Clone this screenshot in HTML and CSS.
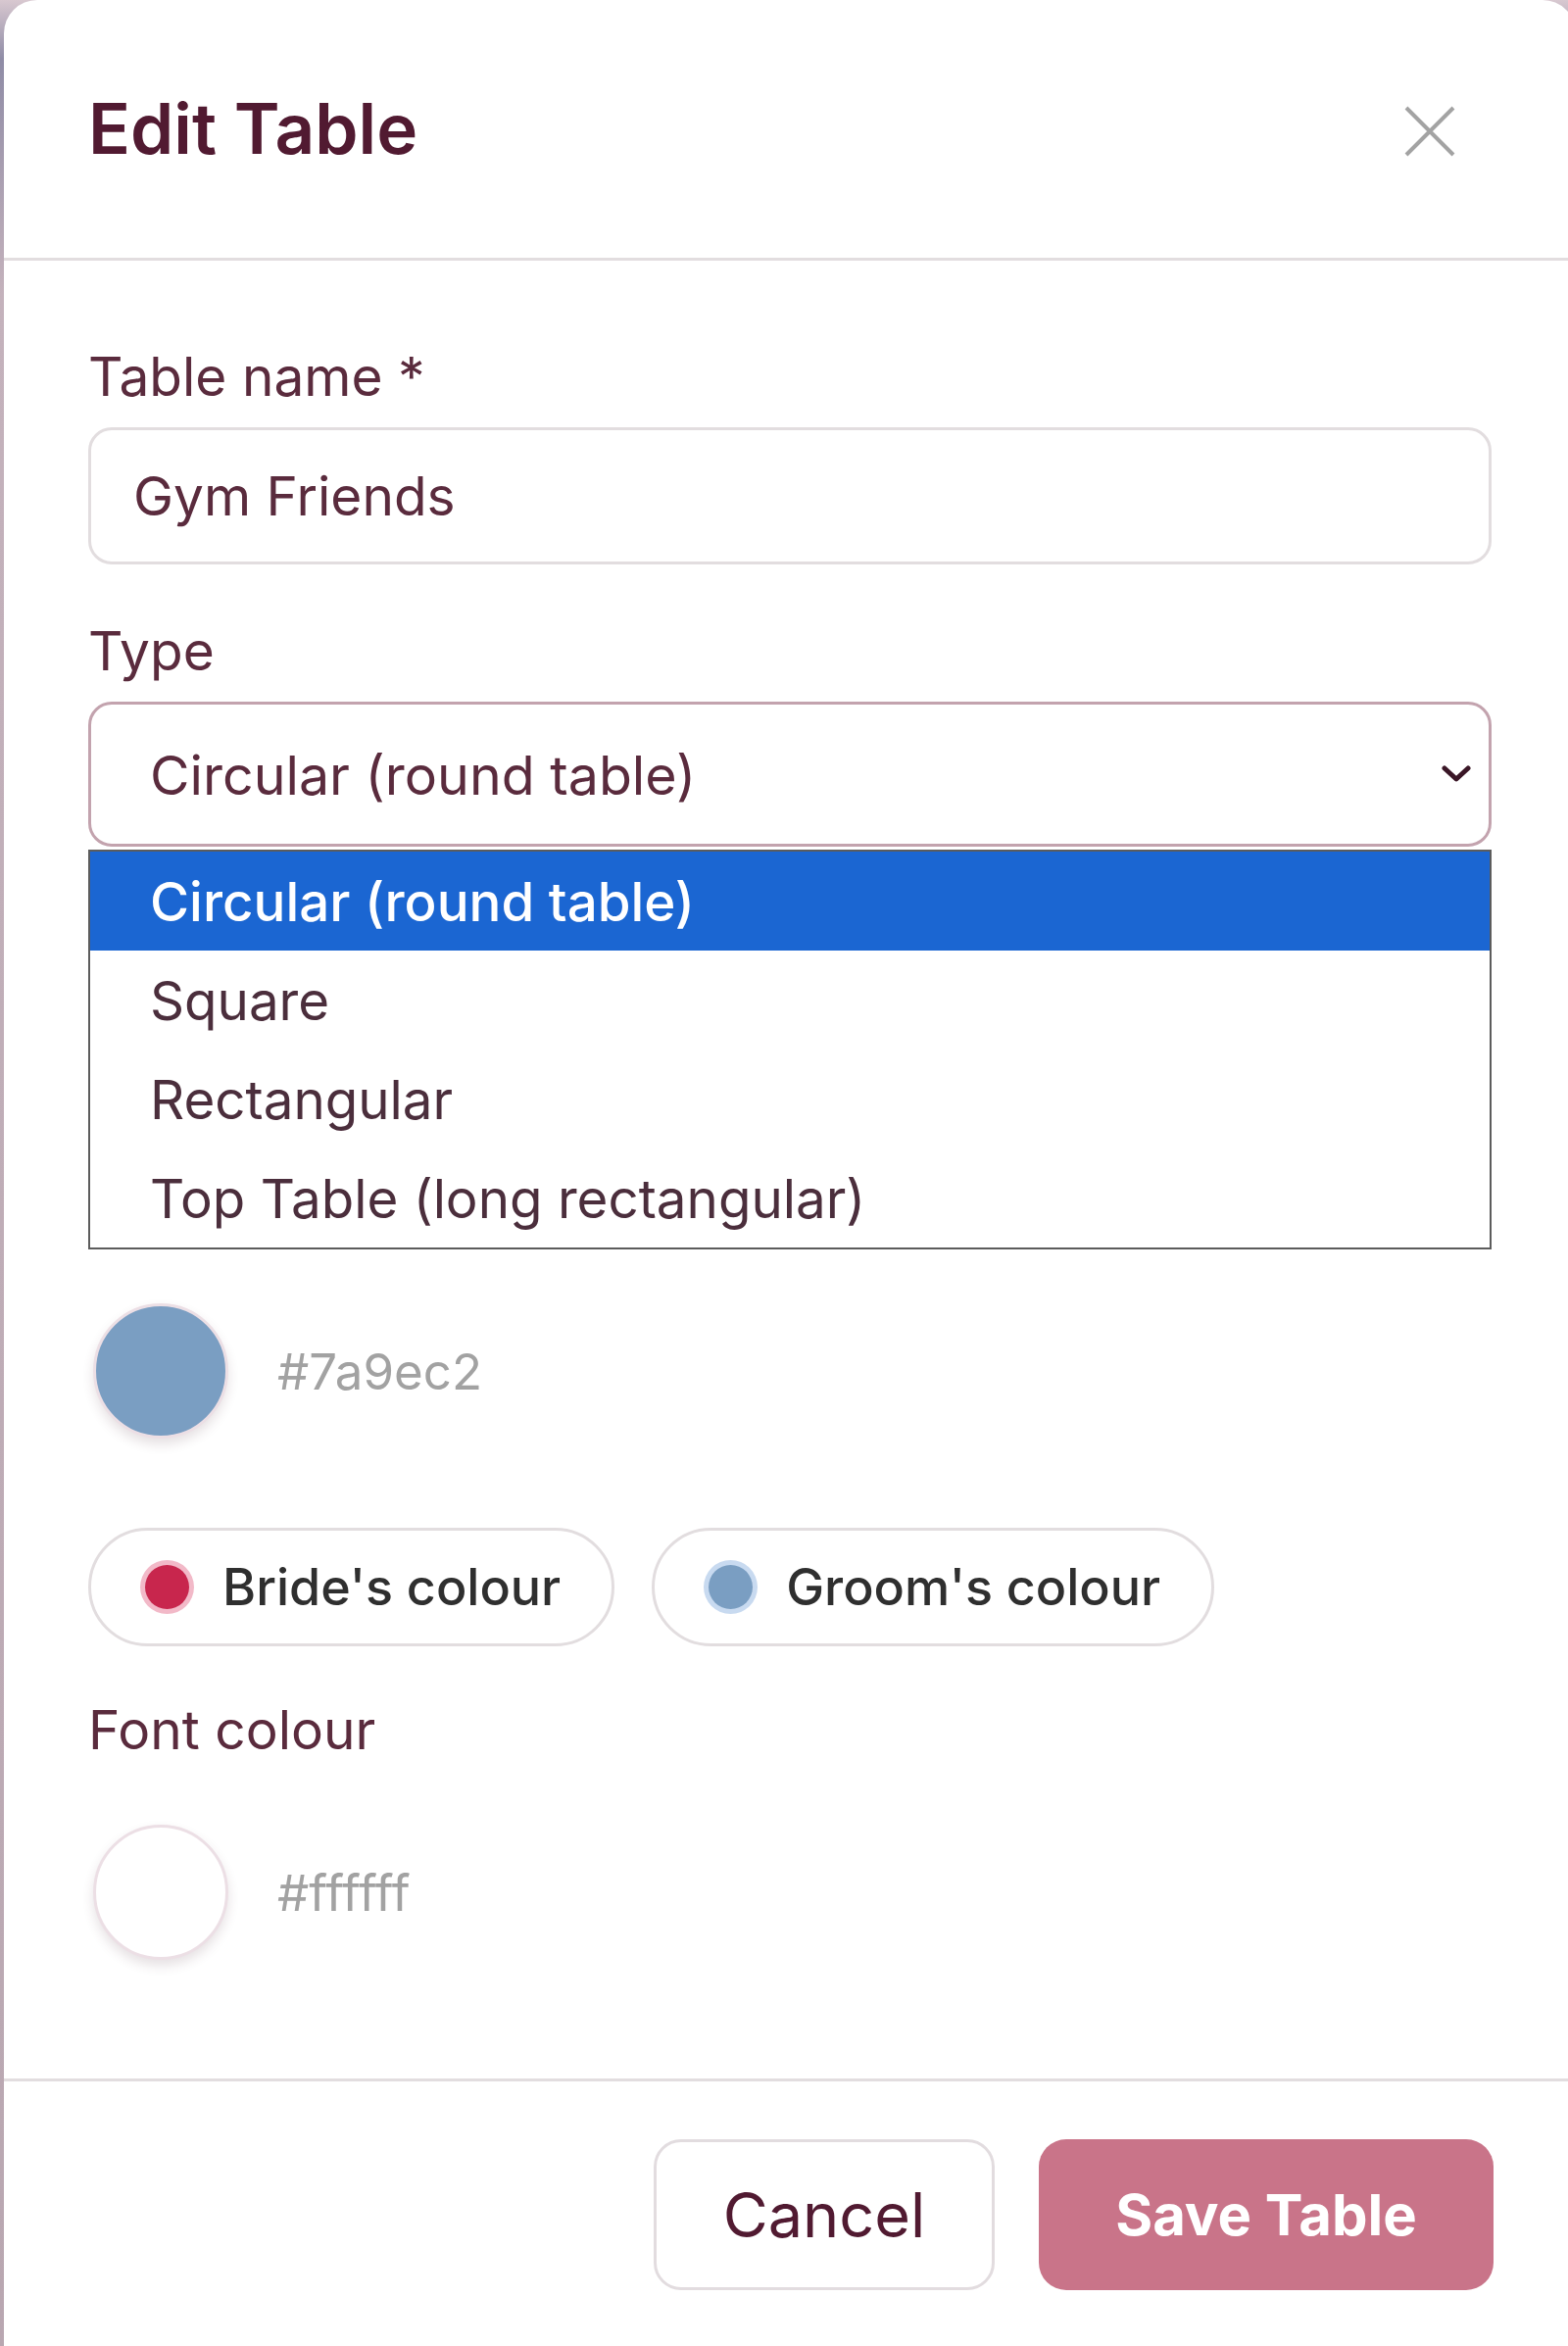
FILE: index.html
```html
<!DOCTYPE html>
<html lang="en">
<head>
  <meta charset="UTF-8" />
  <meta name="viewport" content="width=device-width, initial-scale=1.0" />
  <title>Edit Table</title>
  <link rel="stylesheet" href="styles.css">
</head>
<body>
  <div class="modal">
    <div class="modal-header">
      <h2 class="modal-title">Edit Table</h2>
      <button class="close-btn" title="Close">
        <svg viewBox="0 0 54 54" width="54" height="54"><path d="M3 3 L51 51 M51 3 L3 51" /></svg>
      </button>
    </div>

    <div class="modal-body">
      <div class="field">
        <label class="field-label">Table name *</label>
        <div class="text-input">Gym Friends</div>
      </div>

      <div class="field">
        <label class="field-label">Type</label>
        <div class="select-wrap">
          <div class="select-box">
            <span>Circular (round table)</span>
            <svg class="chevron" viewBox="0 0 30 18" width="30" height="18"><path d="M3 3 L15 14 L27 3" /></svg>
          </div>
          <!-- open option list, drawn over the colour field -->
          <ul class="option-list">
            <li class="option selected">Circular (round table)</li>
            <li class="option">Square</li>
            <li class="option">Rectangular</li>
            <li class="option">Top Table (long rectangular)</li>
          </ul>
        </div>
      </div>

      <div class="swatch-row table-swatch">
        <span class="swatch" style="background:#7a9ec2"></span>
        <span class="hex">#7a9ec2</span>
      </div>

      <div class="chips">
        <button class="chip"><span class="dot dot-bride"></span>Bride's colour</button>
        <button class="chip"><span class="dot dot-groom"></span>Groom's colour</button>
      </div>

      <div class="field font-field">
        <label class="field-label">Font colour</label>
        <div class="swatch-row">
          <span class="swatch" style="background:#ffffff"></span>
          <span class="hex">#ffffff</span>
        </div>
      </div>
    </div>

    <div class="modal-footer">
      <button class="btn btn-cancel">Cancel</button>
      <button class="btn btn-save">Save Table</button>
    </div>
  </div>
</body>
</html>
```

FILE: styles.css
```css
:root {
  --maroon: #511a31;
  --label: #5a2b3d;
  --line: #e2dddf;
  --rose: #c97489;
}

html, body { margin: 0; height: 100%; }
body {
  background: linear-gradient(180deg, #d8c8d0 0, #8f8ca6 60px, #c4b2bc 300px, #b9a7b1 100%);
  font-family: Inter, "Liberation Sans", sans-serif;
  overflow: hidden;
}

.modal {
  margin-left: 4px;
  width: 1604px;
  min-height: 2440px;
  background: #fff;
  border-radius: 34px;
}

/* header */
.modal-header {
  height: 263px;
  padding: 0 86px;
  display: flex;
  align-items: center;
  justify-content: space-between;
  border-bottom: 3px solid var(--line);
}
.modal-title { margin: 0; font-size: 71px; font-weight: 600; color: var(--maroon); line-height: 1; }
.close-btn { background: none; border: 0; padding: 0; margin: 4px 36px 0 0; width: 54px; height: 54px; cursor: pointer; }
.close-btn svg path { stroke: #a3a3a3; stroke-width: 4; fill: none; }

/* body */
.modal-body { padding: 86px 86px 121px; }
.field { margin-bottom: 56px; }
.field-label { display: block; font-size: 55px; line-height: 64px; color: var(--label); margin-bottom: 20px; }

.text-input {
  box-sizing: border-box;
  height: 140px;
  border: 3px solid var(--line);
  border-radius: 24px;
  padding-left: 43px;
  display: flex;
  align-items: center;
  font-size: 55px;
  color: var(--label);
}

.select-wrap { position: relative; }
.select-box {
  box-sizing: border-box;
  height: 148px;
  border: 3px solid #c3a3ae;
  border-radius: 24px;
  padding: 0 18px 0 60px;
  display: flex;
  align-items: center;
  justify-content: space-between;
  font-size: 55.5px;
  color: var(--label);
}
.chevron path { stroke: #3a1626; stroke-width: 5; fill: none; stroke-linecap: round; stroke-linejoin: round; }

.option-list {
  position: absolute;
  top: calc(100% + 3px);
  left: 0;
  right: 0;
  margin: 0;
  padding: 0;
  list-style: none;
  background: #fff;
  border: 2px solid #5c5c5c;
  z-index: 5;
}
.option { height: 101px; padding-left: 61px; display: flex; align-items: center; font-size: 54.7px; color: #4b2e3c; }
.option.selected { background: #1b66d2; color: #fff; font-weight: 500; }

.swatch-row { display: flex; align-items: center; gap: 50px; padding-left: 5px; }
.table-swatch { margin-top: 466px; }
.swatch {
  width: 138px;
  height: 138px;
  border-radius: 50%;
  box-sizing: border-box;
  border: 3px solid #ecdfe5;
  box-shadow: 0 6px 12px rgba(80, 40, 60, .14);
}
.hex { font-size: 51px; color: #a2a2a2; }

.chips { display: flex; gap: 38px; margin: 91px 0 53px; }
.chip {
  box-sizing: border-box;
  height: 121px;
  padding: 0 52px 0 55px;
  border: 3px solid var(--line);
  border-radius: 999px;
  background: #fff;
  display: flex;
  align-items: center;
  gap: 34px;
  font-family: inherit;
  font-size: 52px;
  font-weight: 500;
  color: #2f2f2f;
}
.dot { width: 45px; height: 45px; border-radius: 50%; }
.dot-bride { background: #c8264d; box-shadow: 0 0 0 5px #f2b9c8; }
.dot-groom { background: #7a9ec2; box-shadow: 0 0 0 5px #c8daf0; }

.font-field { margin-bottom: 0; }
.font-field .field-label { margin-bottom: 65px; }

/* footer */
.modal-footer {
  border-top: 3px solid var(--line);
  padding: 59px 84px 0;
  display: flex;
  justify-content: flex-end;
  gap: 45px;
}
.btn {
  height: 154px;
  border-radius: 28px;
  font-family: inherit;
  cursor: pointer;
}
.btn-cancel { width: 348px; background: #fff; border: 3px solid #e2dcdf; color: var(--maroon); font-size: 63px; }
.btn-save { width: 464px; background: var(--rose); border: 0; color: #fff; font-weight: 700; font-size: 58px; }
```
